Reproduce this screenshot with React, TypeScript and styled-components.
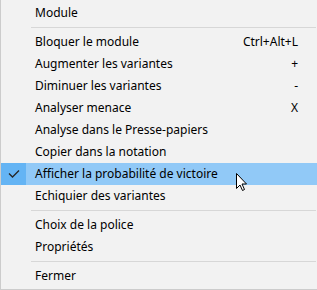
import React from "react";
import styled, { createGlobalStyle } from "styled-components";

const Global = createGlobalStyle`
  html, body { margin: 0; padding: 0; background: #f2f2f2; }
  #root { width: 317px; height: 290px; }
`;

const Menu = styled.div`
  position: relative;
  box-sizing: border-box;
  width: 317px;
  height: 290px;
  background: #f2f2f2;
  border-left: 1px solid #cccccc;
  border-bottom: 1px solid #cccccc;
  padding: 2px 0;
  display: flex;
  flex-direction: column;
  font-family: "Noto Sans", "Segoe UI", sans-serif;
  font-size: 12px;
  color: #000;
`;

const Row = styled.div<{ $active?: boolean }>`
  height: 22px;
  flex: none;
  display: grid;
  grid-template-columns: 25px 9px 1fr auto;
  align-items: center;
  background: ${(p) => (p.$active ? "#91c9f7" : "transparent")};
  padding-right: 19px;
`;

const CheckCell = styled.div<{ $on?: boolean }>`
  height: 22px;
  background: ${(p) => (p.$on ? "#64b4f4" : "transparent")};
  display: flex;
  align-items: center;
  justify-content: center;
`;

const Label = styled.span`
  grid-column: 3;
  white-space: nowrap;
  line-height: 22px;
`;

const Shortcut = styled.span`
  grid-column: 4;
  white-space: nowrap;
  line-height: 22px;
  text-align: right;
`;

const Separator = styled.div`
  height: 7px;
  flex: none;
  box-sizing: border-box;
  padding: 3px 1px 3px 30px;
  &::after {
    content: "";
    display: block;
    height: 1px;
    background: #d7d7d7;
  }
`;

const Cursor = styled.svg`
  position: absolute;
  left: 234px;
  top: 172px;
`;

type Item = { label: string; shortcut?: string; checked?: boolean; active?: boolean } | "sep";

const items: Item[] = [
  { label: "Module" },
  "sep",
  { label: "Bloquer le module", shortcut: "Ctrl+Alt+L" },
  { label: "Augmenter les variantes", shortcut: "+" },
  { label: "Diminuer les variantes", shortcut: "-" },
  { label: "Analyser menace", shortcut: "X" },
  { label: "Analyse dans le Presse-papiers" },
  { label: "Copier dans la notation" },
  { label: "Afficher la probabilité de victoire", checked: true, active: true },
  { label: "Echiquier des variantes" },
  "sep",
  { label: "Choix de la police" },
  { label: "Propriétés" },
  "sep",
  { label: "Fermer" },
];

export default function App() {
  return (
    <>
      <Global />
      <Menu>
        {items.map((it, i) =>
          it === "sep" ? (
            <Separator key={i} />
          ) : (
            <Row key={i} $active={it.active}>
              <CheckCell $on={it.checked}>
                {it.checked && (
                  <svg width="12" height="10" viewBox="0 0 12 10">
                    <path d="M1 4.5 L4.5 8 L11 1.5" fill="none" stroke="#262626" strokeWidth="1.3" />
                  </svg>
                )}
              </CheckCell>
              <Label>{it.label}</Label>
              {it.shortcut && <Shortcut>{it.shortcut}</Shortcut>}
            </Row>
          )
        )}
        <Cursor width="13" height="20" viewBox="0 0 13 20">
          <path
            d="M1.5 1.5 L1.5 16.5 L5 13 L7.5 18.5 L9.5 17.5 L7 12 L11.5 12 Z"
            fill="#fff"
            stroke="#000"
            strokeWidth="1"
            strokeLinejoin="miter"
          />
        </Cursor>
      </Menu>
    </>
  );
}
